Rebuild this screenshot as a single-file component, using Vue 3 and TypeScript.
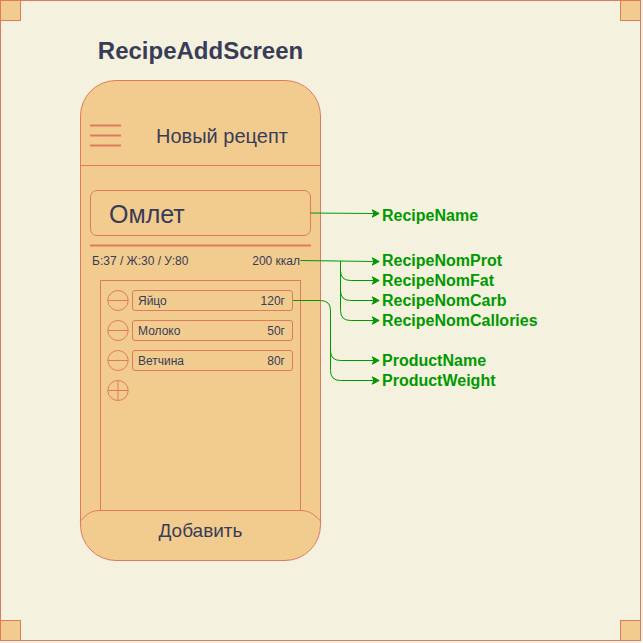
<script setup lang="ts">
import { ref } from 'vue'

interface Product {
  id: number
  name: string
  weight: string
}

interface Callout {
  text: string
  y: number
}

const recipeName = ref('Омлет')

const products = ref<Product[]>([
  { id: 1, name: 'Яйцо', weight: '120г' },
  { id: 2, name: 'Молоко', weight: '50г' },
  { id: 3, name: 'Ветчина', weight: '80г' },
])

let nextId = 4

function addProduct(): void {
  products.value.push({ id: nextId++, name: '', weight: '' })
}

function removeProduct(id: number): void {
  products.value = products.value.filter((p) => p.id !== id)
}

const callouts: Callout[] = [
  { text: 'RecipeName', y: 206 },
  { text: 'RecipeNomProt', y: 251 },
  { text: 'RecipeNomFat', y: 271 },
  { text: 'RecipeNomCarb', y: 291 },
  { text: 'RecipeNomCallories', y: 311 },
  { text: 'ProductName', y: 351 },
  { text: 'ProductWeight', y: 371 },
]

const wires: string[] = [
  'M310.5 213 L374 213.5',
  'M300.5 260.5 L374 261.5',
  'M340.5 261 V270.5 Q340.5 280.5 350.5 280.5 H374',
  'M340.5 261 V290.5 Q340.5 300.5 350.5 300.5 H374',
  'M340.5 261 V310.5 Q340.5 320.5 350.5 320.5 H374',
  'M293 300.5 H320.5 Q330.5 300.5 330.5 310.5 V350.5 Q330.5 360.5 340.5 360.5 H374',
  'M330.5 310.5 V370.5 Q330.5 380.5 340.5 380.5 H374',
]

const arrowHeads: number[] = [213.5, 261.5, 280.5, 300.5, 320.5, 360.5, 380.5]
</script>

<template>
  <main class="board">
    <span class="corner top left"></span>
    <span class="corner top right"></span>
    <span class="corner bottom left"></span>
    <span class="corner bottom right"></span>

    <section class="screen">
      <h1 class="title">RecipeAddScreen</h1>

      <form class="phone" @submit.prevent>
        <header class="bar">
          <button type="button" class="menu" aria-label="Меню">
            <svg width="31" height="23" viewBox="0 0 31 23">
              <path d="M0 1.5H31M0 11.5H31M0 21.5H31" />
            </svg>
          </button>
          <h2 class="heading">Новый рецепт</h2>
        </header>

        <div class="body">
          <input v-model="recipeName" class="recipe-name" type="text" aria-label="Название рецепта" />
          <svg class="rule" height="3" aria-hidden="true">
            <line x1="0" y1="1.5" x2="100%" y2="1.5" />
          </svg>
          <div class="stats">
            <span>Б:37 / Ж:30 / У:80</span>
            <span>200 ккал</span>
          </div>

          <ul class="products">
            <li v-for="product in products" :key="product.id" class="row">
              <button type="button" class="round" aria-label="Убрать" @click="removeProduct(product.id)">
                <svg width="22" height="21" viewBox="0 0 22 21">
                  <ellipse cx="11" cy="10.5" rx="10.2" ry="10" />
                  <path d="M1 10.5H21" />
                </svg>
              </button>
              <div class="field">
                <input v-model="product.name" class="name" type="text" aria-label="Продукт" />
                <input v-model="product.weight" class="weight" type="text" aria-label="Вес" />
              </div>
            </li>
            <li class="row">
              <button type="button" class="round" aria-label="Добавить продукт" @click="addProduct">
                <svg width="22" height="21" viewBox="0 0 22 21">
                  <ellipse cx="11" cy="10.5" rx="10.2" ry="10" />
                  <path d="M1 10.5H21M11 1V20" />
                </svg>
              </button>
            </li>
          </ul>
        </div>

        <button type="submit" class="submit">
          <svg class="edge" width="243" height="13" viewBox="0 0 243 13" aria-hidden="true">
            <path d="M1 11.5L5 7.5Q11 0.5 20 0.5H222Q231 0.5 238 7.5L242 11.5" />
          </svg>
          Добавить
        </button>
      </form>
    </section>

    <svg class="wires" width="640" height="640" viewBox="0 0 640 640" aria-hidden="true">
      <path v-for="d in wires" :key="d" class="wire" :d="d" />
      <path
        v-for="y in arrowHeads"
        :key="y"
        class="arrow"
        :d="`M379.2 ${y}L372.2 ${y + 3.7}L374 ${y}L372.2 ${y - 3.7}Z`"
      />
    </svg>

    <span v-for="c in callouts" :key="c.text" class="callout" :style="{ top: c.y + 'px' }">{{ c.text }}</span>
  </main>
</template>

<style>
body {
  margin: 0;
  background: #f4f1de;
}
</style>

<style scoped>
.board {
  --line: #e07a5f;
  --fill: #f2cc8f;
  --ink: #393c56;
  --note: #009900;
  position: relative;
  box-sizing: border-box;
  min-height: calc(100vh - 2px);
  margin: 0 2px 2px 0;
  border: 1px solid var(--line);
  background: #f4f1de;
  color: var(--ink);
  font-family: "Liberation Sans", Arial, sans-serif;
}

.board *,
.board *::before {
  box-sizing: border-box;
}

.corner {
  position: absolute;
  width: 21px;
  height: 21px;
  border: 1px solid var(--line);
  background: var(--fill);
}

.top { top: -1px; }
.bottom { bottom: -1px; }
.left { left: -1px; }
.right { right: -1px; }

.board > .screen {
  display: flex;
  flex-direction: column;
  width: 241px;
  padding: 36px 0 79px 79px;
  box-sizing: content-box;
}

.title {
  align-self: center;
  margin: 0;
  font-size: 24px;
  line-height: 28px;
  padding-bottom: 15px;
}

.phone {
  display: flex;
  flex-direction: column;
  min-height: 481px;
  border: 1px solid var(--line);
  border-radius: 36px;
  background: var(--fill);
}

button,
input {
  margin: 0;
  padding: 0;
  border: 0;
  background: none;
  color: inherit;
  font-family: inherit;
}

svg {
  display: block;
  fill: none;
  stroke: var(--line);
}

.bar {
  display: flex;
  align-items: center;
  gap: 35px;
  height: 85px;
  padding: 25px 9px 0;
  border-bottom: 1px solid var(--line);
}

.menu svg {
  stroke-width: 2px;
}

.heading {
  margin: 0;
  font-size: 20px;
  line-height: 24px;
  font-weight: 400;
  white-space: nowrap;
}

.body {
  display: flex;
  flex: 1;
  flex-direction: column;
  padding: 24px 9px 0;
}

.recipe-name {
  width: 100%;
  height: 46px;
  padding: 3px 18px 0;
  border: 1px solid var(--line);
  border-radius: 7px;
  font-size: 25px;
}

.rule {
  width: 100%;
  margin-top: 8px;
  stroke-width: 2px;
}

.stats {
  display: flex;
  justify-content: space-between;
  padding: 7px 11px 12px 2px;
  font-size: 12px;
  line-height: 14px;
}

.products {
  display: flex;
  flex: 1;
  flex-direction: column;
  gap: 9px;
  margin: 0 10px;
  padding: 9px 7px 9px 6px;
  border: 1px solid var(--line);
  border-bottom: 0;
  list-style: none;
}

.row {
  display: flex;
  align-items: center;
  gap: 3px;
  height: 21px;
}

.field {
  display: flex;
  flex: 1;
  min-width: 0;
  height: 21px;
  padding: 0 7px 0 5px;
  border: 1px solid var(--line);
  border-radius: 3px;
}

.field input {
  min-width: 0;
  font-size: 12px;
}

.name {
  flex: 1;
}

.weight {
  width: 40px;
  text-align: right;
}

.submit {
  position: relative;
  height: 50px;
  padding-bottom: 8px;
  font-size: 19px;
}

.edge {
  position: absolute;
  top: 0;
  left: -2px;
}

.wires {
  position: absolute;
  top: -1px;
  left: -1px;
  pointer-events: none;
}

.wire {
  stroke: var(--note);
}

.arrow {
  fill: var(--note);
  stroke: var(--note);
}

.callout {
  position: absolute;
  left: 381px;
  font-size: 16px;
  line-height: 18px;
  font-weight: 700;
  color: var(--note);
}
</style>
